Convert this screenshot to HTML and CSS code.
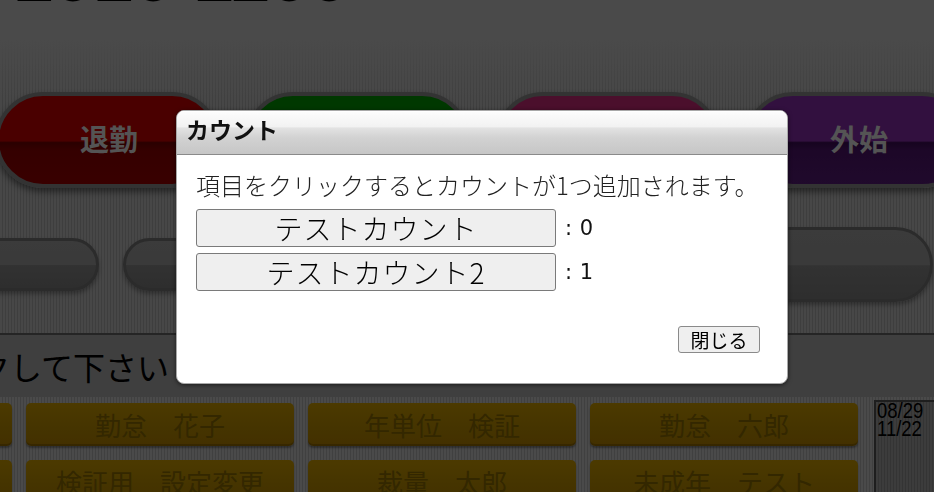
FILE: index.html
```html
<!DOCTYPE html>
<html lang="ja">
<head>
<meta charset="utf-8">
<title>タイムカード</title>
<link rel="stylesheet" href="styles.css">
</head>
<body>
<div class="page">
  <div class="top">
    <div class="clock"><span class="clock-text">1010 1100</span></div>
    <div class="punch-row">
      <button class="punch red">退勤</button>
      <button class="punch green">出勤</button>
      <button class="punch magenta">外出</button>
      <button class="punch purple">外始</button>
    </div>
    <div class="pill-row">
      <span class="pill pill-a"></span>
      <span class="pill pill-b"></span>
      <span class="pill pill-c"></span>
    </div>
  </div>
  <div class="prompt">クリックして下さい</div>
  <div class="staff">
    <div class="names">
      <button class="name">勤怠　一郎</button>
      <button class="name">勤怠　花子</button>
      <button class="name">年単位　検証</button>
      <button class="name">勤怠　六郎</button>
      <button class="name">勤怠　次郎</button>
      <button class="name">検証用　設定変更</button>
      <button class="name">裁量　太郎</button>
      <button class="name">未成年　テスト</button>
    </div>
    <div class="dates"><span class="date">08/29</span><span class="date">11/22</span></div>
  </div>
</div>
<div class="overlay"></div>
<div class="dialog" role="dialog">
  <div class="dialog-title">カウント</div>
  <div class="dialog-body">
    <p class="intro">項目をクリックするとカウントが1つ追加されます。</p>
    <div class="count-row"><button class="count-btn">テストカウント</button><span class="count-val">:&nbsp;0</span></div>
    <div class="count-row"><button class="count-btn">テストカウント2</button><span class="count-val">:&nbsp;1</span></div>
    <div class="actions"><button class="close-btn">閉じる</button></div>
  </div>
</div>
</body>
</html>
```
FILE: styles.css
```css
html, body {
  margin: 0;
  padding: 0;
  width: 934px;
  height: 492px;
  overflow: hidden;
}
body {
  font-family: "Noto Sans CJK JP", "Noto Sans", sans-serif;
  background: #7e7e7e;
}
button {
  font-family: "Noto Sans CJK JP", "Noto Sans", sans-serif;
  cursor: pointer;
}
.page {
  width: 934px;
}
.top {
  background:
    linear-gradient(to bottom, #949494 0, #949494 40px, rgba(148,148,148,0) 110px),
    repeating-linear-gradient(90deg, #8e8e8e 0 2px, #7c7c7c 2px 3px);
  border-bottom: 2px solid #4a4a4a;
}
.clock {
  display: flow-root;
  height: 92px;
}
.clock-text {
  display: block;
  margin-top: -60px;
  padding-left: 13px;
  font-family: "Liberation Sans", sans-serif;
  font-weight: bold;
  font-size: 72px;
  line-height: 72px;
  color: #000;
  white-space: nowrap;
}
.punch-row {
  display: flex;
  gap: 25px;
  margin-left: -5px;
  height: 96px;
}
.punch {
  flex: 0 0 225px;
  height: 96px;
  box-sizing: border-box;
  border: 4px solid #666;
  border-radius: 48px;
  padding: 0 0 5px 3px;
  font-weight: bold;
  font-size: 29px;
  color: #a8a8a8;
  box-shadow: 0 4px 6px rgba(0,0,0,.45);
}
.red { background: linear-gradient(#940000 0, #940000 51%, #540000 53%, #6a0000 62%, #720000 100%); }
.green { background: linear-gradient(#007000 0, #007000 51%, #003c00 53%, #004c00 62%, #005200 100%); }
.magenta { background: linear-gradient(#961e58 0, #961e58 51%, #560a30 53%, #66103c 62%, #6c1040 100%); }
.purple { background: linear-gradient(#64207e 0, #64207e 51%, #2c083e 53%, #3a0e50 62%, #401458 100%); }
.pill-row {
  display: flex;
  align-items: center;
  height: 137px;
  padding-top: 8px;
}
.pill {
  box-sizing: border-box;
  border: 3px solid #565656;
  background: linear-gradient(#767676 0, #747474 50%, #646464 52%, #5c5c5c 100%);
  box-shadow: 0 3px 4px rgba(0,0,0,.3);
}
.pill-a {
  width: 129px;
  height: 53px;
  margin-left: -30px;
  border-radius: 27px;
}
.pill-b {
  width: 130px;
  height: 53px;
  margin-left: 24px;
  border-radius: 27px;
}
.pill-c {
  width: 360px;
  height: 75px;
  margin-left: auto;
  margin-right: 1px;
  border-radius: 38px;
}
.prompt {
  height: 62px;
  margin-left: -118px;
  font-size: 32px;
  line-height: 62px;
  color: #000;
  white-space: nowrap;
}
.staff {
  display: flex;
  align-items: flex-start;
  height: 95px;
  padding-top: 6px;
  background: repeating-linear-gradient(90deg, #949494 0 2px, #808080 2px 3px);
}
.names {
  display: grid;
  grid-template-columns: repeat(4, 268px);
  grid-auto-rows: 43px;
  gap: 14px;
  margin-left: -256px;
  flex: none;
}
.name {
  border: none;
  border-radius: 5px;
  padding: 0;
  background: linear-gradient(#987400, #8a6800 60%, #866000);
  box-shadow: inset 0 -2px 0 rgba(0,0,0,.18), 0 2px 2px rgba(0,0,0,.35);
  font-size: 26px;
  color: #664e00;
  white-space: nowrap;
}
.dates {
  flex: none;
  display: flex;
  flex-direction: column;
  width: 70px;
  height: 100px;
  box-sizing: border-box;
  margin: -3px 0 0 16px;
  padding-left: 1px;
  border: 2px solid #3c3c3c;
  border-right: none;
  border-bottom: none;
  background: repeating-linear-gradient(90deg, #787878 0 2px, #686868 2px 3px);
}
.date {
  display: block;
  font-family: "Liberation Sans", sans-serif;
  font-size: 22px;
  line-height: 18px;
  color: #000;
  transform: scaleX(0.84);
  transform-origin: 0 50%;
  white-space: nowrap;
}
.overlay {
  position: fixed;
  inset: 0;
  background: rgba(0,0,0,.5);
}
.dialog {
  position: absolute;
  left: 176px;
  top: 110px;
  width: 612px;
  height: 274px;
  box-sizing: border-box;
  border: 1px solid #a8a8a8;
  border-radius: 8px;
  background: #fff;
  box-shadow: 0 1px 4px rgba(0,0,0,.55);
  overflow: hidden;
}
.dialog-title {
  height: 44px;
  box-sizing: border-box;
  border-bottom: 1px solid #8a8a8a;
  padding-left: 9px;
  background: linear-gradient(#fdfdfd 0, #f2f2f2 36%, #e2e2e2 40%, #d2d2d2 62%, #c6c6c6 100%);
  box-shadow: inset 0 1px 0 #fff;
  font-weight: bold;
  font-size: 23px;
  line-height: 36px;
  color: #111;
}
.dialog-body {
  padding: 14px 27px 0 19px;
}
.intro {
  margin: 0;
  font-size: 24px;
  font-weight: 300;
  line-height: 32px;
  color: #222;
  white-space: nowrap;
}
.count-row {
  display: flex;
  align-items: center;
  margin-top: 6px;
}
.count-row:first-of-type {
  margin-top: 8px;
}
.count-btn {
  width: 360px;
  height: 38px;
  box-sizing: border-box;
  border: 1px solid #7a7a7a;
  border-radius: 3px;
  background: #efefef;
  padding: 0;
  font-size: 28px;
  font-weight: 300;
  letter-spacing: 1px;
  line-height: 36px;
  color: #000;
}
.count-val {
  margin-left: 9px;
  font-family: "DejaVu Sans", sans-serif;
  font-size: 21px;
  word-spacing: 1px;
  color: #111;
}
.actions {
  display: flex;
  justify-content: flex-end;
  margin-top: 35px;
}
.close-btn {
  width: 82px;
  height: 27px;
  box-sizing: border-box;
  border: 1px solid #8a8a8a;
  border-radius: 3px;
  background: #efefef;
  padding: 0;
  font-size: 19px;
  line-height: 25px;
  color: #000;
}
```
